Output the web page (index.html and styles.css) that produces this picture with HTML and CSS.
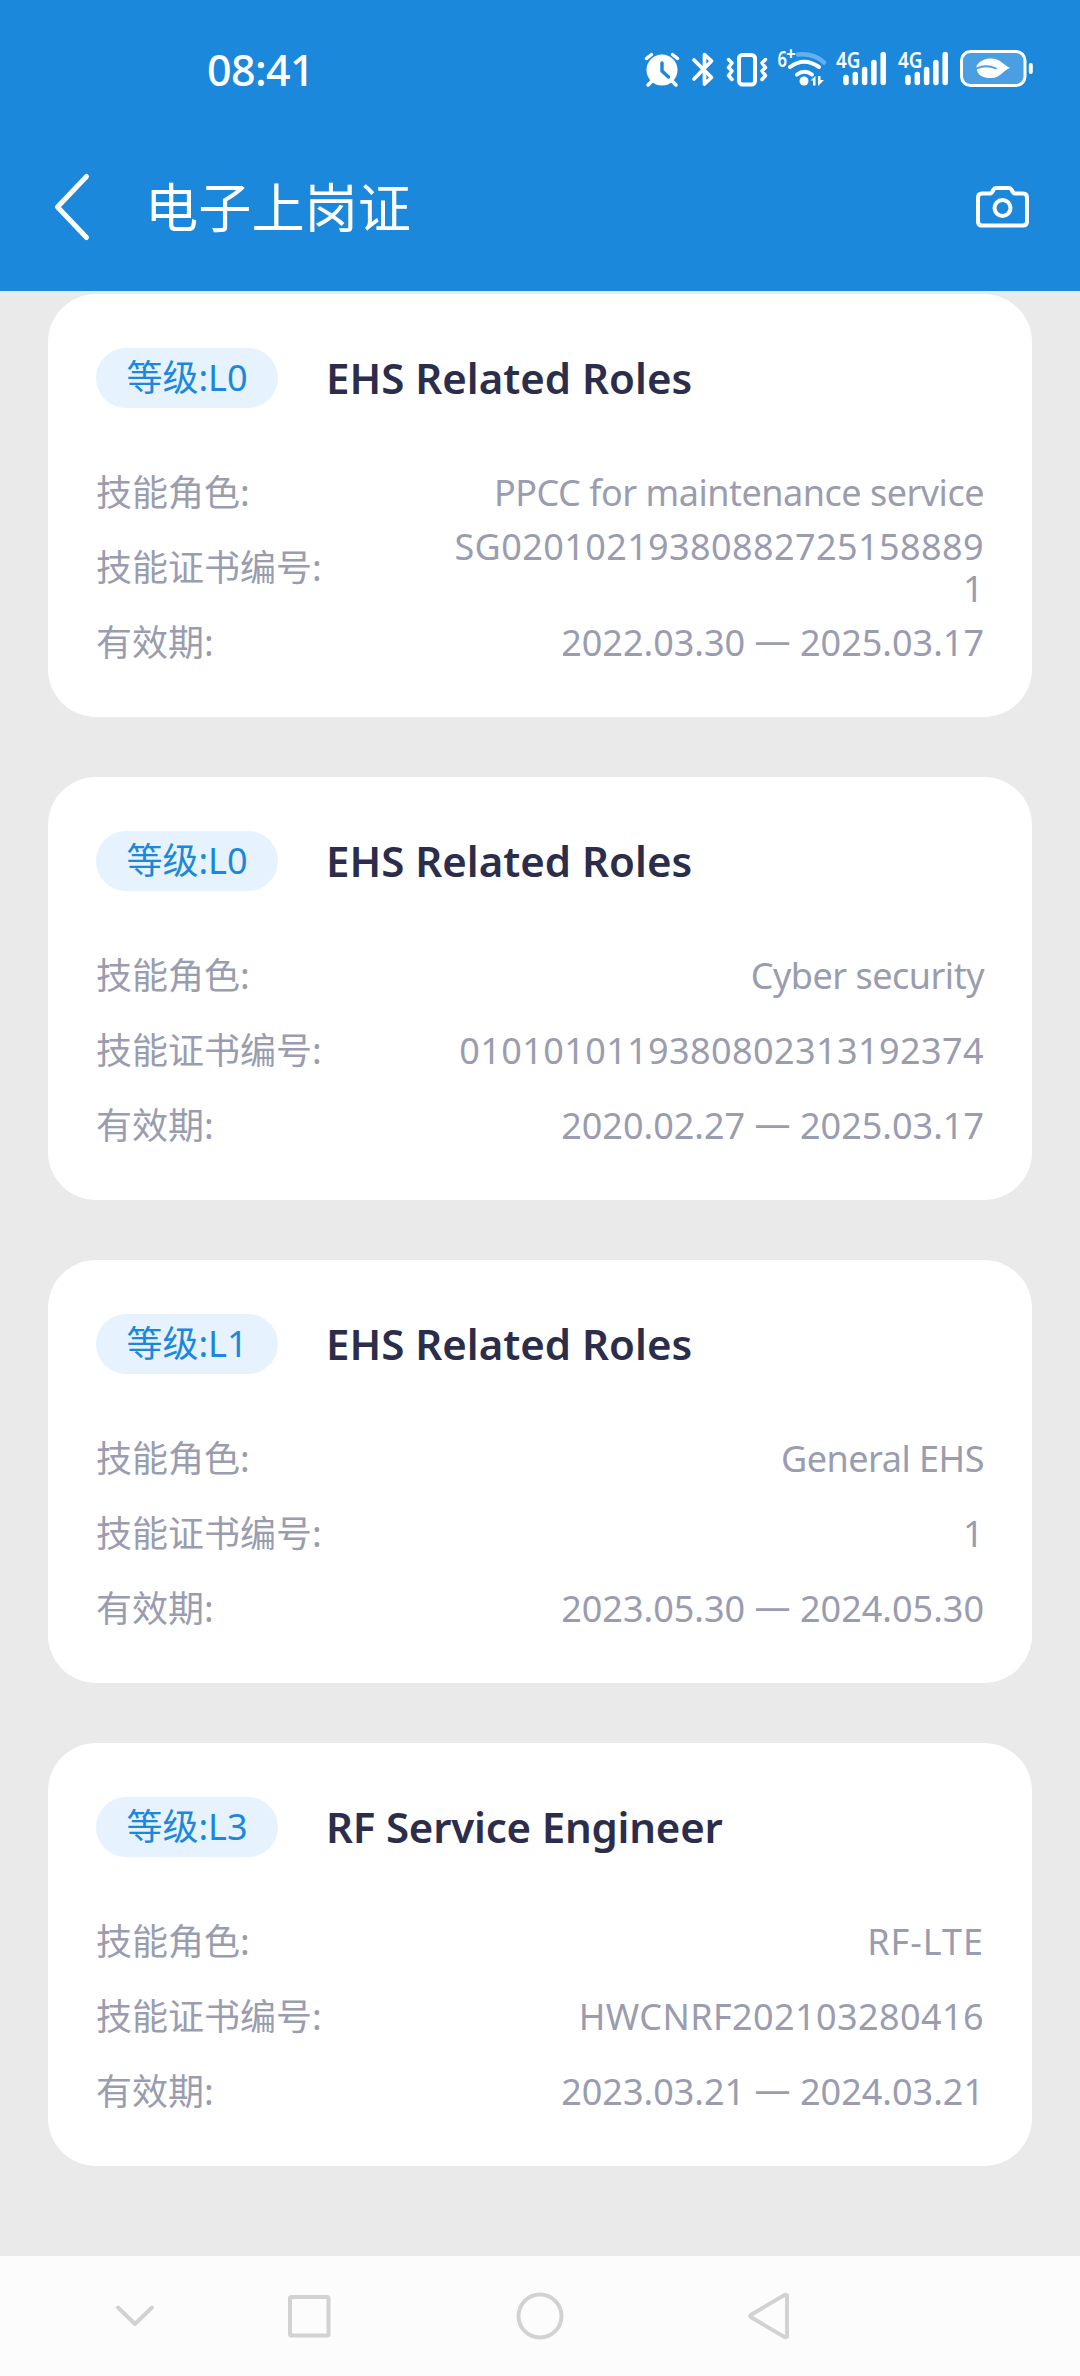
FILE: index.html
```html
<!DOCTYPE html>
<html lang="zh-CN">
<head>
<meta charset="utf-8">
<title>电子上岗证</title>
<link rel="stylesheet" href="styles.css">
</head>
<body>
<header class="top">
  <div class="status">
    <span class="clock">08:41</span>
    <svg class="status-icons" width="410" height="50" viewBox="636 44 410 50" fill="none" stroke="#fff" stroke-width="4" stroke-linecap="round" stroke-linejoin="round">
      <circle cx="662" cy="70" r="15.5" fill="#fff" stroke="none"/>
      <path d="M646.500 58.500l5-4M677.500 58.500l-5-4M652 81l-4 4M672 81l4 4" stroke-width="3.500"/>
      <path d="M662 63v8l6.500 6" stroke="#1b88dc" stroke-width="3.500"/>
      <path d="M694 60l17.500 17.500-7 6.500V54.500l7 6.500L694 79" stroke-width="3.700"/>
      <rect x="739" y="55" width="16" height="29.500" rx="3.500"/>
      <path d="M728.500 59.500l3.500 3.500-3.500 4.500 3.500 3.500-3.500 4.500 3.500 4M765.500 59.500l-3.500 3.500 3.500 4.500-3.500 3.500 3.500 4.500-3.500 4" stroke-width="3.500"/>
      <text class="gen" x="777.500" y="66.500" textLength="9.500" lengthAdjust="spacingAndGlyphs">6</text>
      <text class="gen plus" x="786" y="60">+</text>
      <path d="M798 54.500Q814 53 824 62.500" stroke="#64b1f0" stroke-width="4.500"/>
      <path d="M790 67Q804 56.500 819 67M797 74.500Q804.500 69 812 74.500" stroke-width="4"/>
      <circle cx="804" cy="81" r="4.500" fill="#fff" stroke="none"/>
      <path d="M810.500 80.500l5-4.500v9.500h-2.500v-5zM824 80l-6 6v-10h2.500v4z" fill="#fff" stroke="none"/>
      <g id="signal">
        <text class="gen" x="836" y="67.500" textLength="24.500" lengthAdjust="spacingAndGlyphs">4G</text>
        <path d="M846 77.500v5M855.300 74.500v8M864.600 69.500v13M873.900 62.500v20M883.200 54.500v28" stroke-width="5.500"/>
      </g>
      <use href="#signal" x="62"/>
      <rect x="961.500" y="51.500" width="63.500" height="34" rx="9" fill="#4a9fe4" stroke-width="3"/>
      <path d="M1030.800 65v7"/>
      <path d="M976.500 66C979 61 985 58.500 991 58.500C1000 58.500 1003 64.500 1010 68C1003 70 1001 78 991 78C983 78 976.500 76 976.500 66Z" fill="#fff" stroke="none"/>
      <path d="M976.500 68.500Q986 64 996 68.500" stroke="#4a9fe4" stroke-width="1.800"/>
    </svg>
  </div>
  <div class="bar">
    <svg class="back" width="40" height="70" viewBox="0 0 40 70" fill="none" stroke="#fff" stroke-width="5" stroke-linecap="round" stroke-linejoin="round"><path d="M34.500 4.500L5.500 35l29 30.500"/></svg>
    <h1 class="page-title">电子上岗证</h1>
    <svg class="camera" width="56" height="48" viewBox="0 0 56 48" fill="none" stroke="#fff" stroke-width="4" stroke-linejoin="round"><path d="M8 10.500h7.500q2 0 3-2l1-2q1-1.500 3-1.500h12q2 0 3 1.500l1 2q1 2 3 2H49q4 0 4 4V38.500q0 4-4 4H8q-4 0-4-4V14.500q0-4 4-4Z"/><circle cx="28.500" cy="25" r="8"/></svg>
  </div>
</header>
<main class="list">
  <section class="card">
    <div class="card-head"><span class="badge">等级:L0</span><h2 class="role">EHS Related Roles</h2></div>
    <dl class="rows">
      <div class="row"><dt>技能角色:</dt><dd class="words">PPCC for maintenance service</dd></div>
      <div class="row"><dt>技能证书编号:</dt><dd class="num">SG020102193808827251588891</dd></div>
      <div class="row"><dt>有效期:</dt><dd class="date">2022.03.30 <span class="dash">—</span> 2025.03.17</dd></div>
    </dl>
  </section>
  <section class="card">
    <div class="card-head"><span class="badge">等级:L0</span><h2 class="role">EHS Related Roles</h2></div>
    <dl class="rows">
      <div class="row"><dt>技能角色:</dt><dd class="words">Cyber security</dd></div>
      <div class="row"><dt>技能证书编号:</dt><dd class="num">0101010119380802313192374</dd></div>
      <div class="row"><dt>有效期:</dt><dd class="date">2020.02.27 <span class="dash">—</span> 2025.03.17</dd></div>
    </dl>
  </section>
  <section class="card">
    <div class="card-head"><span class="badge">等级:L1</span><h2 class="role">EHS Related Roles</h2></div>
    <dl class="rows">
      <div class="row"><dt>技能角色:</dt><dd class="words">General EHS</dd></div>
      <div class="row"><dt>技能证书编号:</dt><dd class="num">1</dd></div>
      <div class="row"><dt>有效期:</dt><dd class="date">2023.05.30 <span class="dash">—</span> 2024.05.30</dd></div>
    </dl>
  </section>
  <section class="card">
    <div class="card-head"><span class="badge">等级:L3</span><h2 class="role role-rf">RF Service Engineer</h2></div>
    <dl class="rows">
      <div class="row"><dt>技能角色:</dt><dd class="code">RF-LTE</dd></div>
      <div class="row"><dt>技能证书编号:</dt><dd class="num">HWCNRF202103280416</dd></div>
      <div class="row"><dt>有效期:</dt><dd class="date">2023.03.21 <span class="dash">—</span> 2024.03.21</dd></div>
    </dl>
  </section>
</main>
<nav class="nav">
  <svg width="1080" height="120" viewBox="0 0 1080 120" fill="none" stroke="#d2d2d2" stroke-width="4" stroke-linecap="round" stroke-linejoin="round">
    <path d="M118 51.500l17 16.500 17-16.500"/>
    <rect x="290" y="41" width="38.500" height="38.500" rx="1.500"/>
    <circle cx="540" cy="60" r="21.500"/>
    <path d="M751.500 58.500l33-19.500q2.500-1 2.500 1.500v39q0 2.500-2.500 1.500l-33-19.500q-2.500-1.500 0-3Z"/>
  </svg>
</nav>
</body>
</html>
```
FILE: styles.css
```css
* { box-sizing: border-box; }
body {
  margin: 0;
  width: 1080px;
  height: 2376px;
  display: flex;
  flex-direction: column;
  background: #eaeaea;
  font-family: "Noto Sans", "Noto Sans CJK SC", sans-serif;
  font-size: 36px;
}
.top {
  height: 293px;
  flex: none;
  background: #1b88dc;
  border-bottom: 2px solid #d8f1f8;
  color: #fff;
}
.status {
  height: 138px;
  padding: 0 34px 0 207px;
  display: flex;
  align-items: center;
  justify-content: space-between;
}
.clock {
  padding-top: 2px;
  font: 500 43px/60px "Noto Sans", sans-serif;
  letter-spacing: -0.6px;
}
.gen { font: 600 22px "Noto Sans", sans-serif; fill: #fff; stroke: none; }
.plus { font-size: 17px; font-weight: 700; }
.bar {
  height: 138px;
  padding: 0 50px 0 52px;
  display: flex;
  align-items: center;
}
.page-title {
  margin: 0 auto 4px 53px;
  font: 400 53.2px/76px "Noto Sans CJK SC", sans-serif;
}
.list {
  flex: 1;
  padding: 1px 48px 0;
  display: flex;
  flex-direction: column;
  gap: 60px;
}
.card {
  flex: none;
  height: 423px;
  padding: 54px 48px 0;
  border-radius: 48px;
  background: #fff;
}
.card-head { display: flex; align-items: center; height: 60px; gap: 48px; }
.badge {
  width: 182px;
  height: 60px;
  border-radius: 30px;
  background: #e6f3ff;
  color: #1b88dc;
  line-height: 60px;
  text-align: center;
}
.role {
  margin: 0;
  color: #2b2d4a;
  font-size: 42px;
  font-weight: 650;
  line-height: 58px;
}
.role-rf { letter-spacing: -0.2px; }
.rows { margin: 47px 0 0; color: #9a9caf; }
.row { height: 75px; display: flex; align-items: center; justify-content: space-between; }
dt { flex: none; line-height: 50px; }
dd { margin: 0; max-width: 540px; text-align: right; line-height: 42px; overflow-wrap: anywhere; }
.words { letter-spacing: -0.5px; }
.num { letter-spacing: 0.4px; }
.code { letter-spacing: 1px; }
.date { white-space: nowrap; }
.dash { line-height: 0; vertical-align: 3px; }
.nav { height: 120px; flex: none; background: #fcfcfc; }
.nav svg { display: block; }
```
